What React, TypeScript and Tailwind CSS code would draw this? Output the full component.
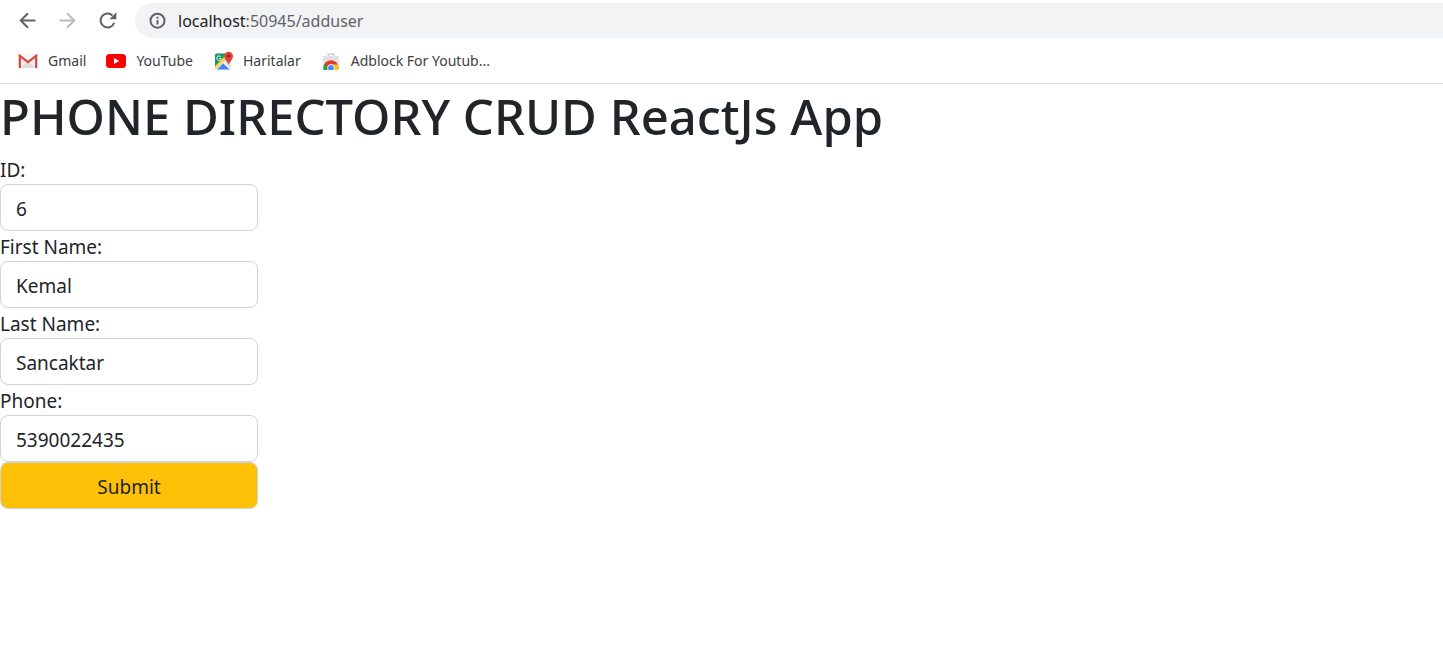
import { useState } from "react";
import type { ReactNode } from "react";

function BackIcon() {
  return (
    <svg viewBox="0 0 20 20" className="size-5" fill="none" stroke="currentColor" strokeWidth="2">
      <path d="M17.500 9.500H3M10 2.300 2.800 9.500l7.200 7.200" />
    </svg>
  );
}

function ForwardIcon() {
  return (
    <svg viewBox="0 0 20 20" className="size-5" fill="none" stroke="currentColor" strokeWidth="2">
      <path d="M1.500 9.500H16M9 2.300l7.200 7.200L9 16.700" />
    </svg>
  );
}

function ReloadIcon() {
  return (
    <svg viewBox="0 0 20 20" className="size-5" fill="none">
      <path d="M16.200 11.700A7 7 0 1 1 14.500 4.500" stroke="currentColor" strokeWidth="2" />
      <path d="M18.400 1.200v7h-7z" fill="currentColor" />
    </svg>
  );
}

function InfoIcon() {
  return (
    <svg viewBox="0 0 18 18" className="size-[18px]" fill="none" stroke="currentColor" strokeWidth="2">
      <circle cx="8.500" cy="8.700" r="7" />
      <path d="M8.500 8v4.600M8.500 4.800v1.900" />
    </svg>
  );
}

function GmailIcon() {
  return (
    <svg viewBox="0 0 20 20" className="size-5">
      <path d="M1 3.500h18v13.500H1z" fill="#ececec" />
      <path d="M3.500 17 10 10l6.500 7z" fill="#dcdcdc" />
      <path d="M3.500 5.500 10 10.500l6.500-5v-2h-13z" fill="#f8f8f8" />
      <path d="M1.800 17V4.700l8.200 6.500 8.200-6.500V17" fill="none" stroke="#d9483b" strokeWidth="2.200" />
    </svg>
  );
}

function YouTubeIcon() {
  return (
    <svg viewBox="0 0 20 20" className="size-5">
      <rect x="0" y="3" width="20" height="14" rx="3.500" fill="#ff0000" />
      <path d="M8 7v6l5.200-3z" fill="#fff" />
    </svg>
  );
}

function MapsIcon() {
  return (
    <svg viewBox="0 0 20 20" className="size-5">
      <defs>
        <clipPath id="map-sheet">
          <rect x="2" y="2.500" width="16" height="16" rx="1.500" />
        </clipPath>
      </defs>
      <g clipPath="url(#map-sheet)">
        <path d="M2 2h16v17H2z" fill="#e4e4e4" />
        <path d="M2 2h15L2 17z" fill="#1e9a5a" />
        <path d="M3.500 19 10.500 12l7 7z" fill="#4285f4" />
        <path d="M1 18 15 4" stroke="#fdd54a" strokeWidth="2.600" />
        <path d="M10.500 11.500 18.500 19.500" stroke="#fff" strokeWidth="1.200" />
      </g>
      <path d="M7.700 5.700A2.200 2.200 0 1 0 8.200 7.500H6.400" fill="none" stroke="#fff" strokeWidth="1" />
      <path d="M15.600 14.500c-.5-3.700-4.400-5.500-4.400-9.400a4.400 4.400 0 0 1 8.800 0c0 3.900-3.900 5.700-4.400 9.400z" fill="#e04438" />
      <circle cx="15.600" cy="5" r="1.500" fill="#7c211c" />
    </svg>
  );
}

function WebStoreIcon() {
  return (
    <svg viewBox="0 0 20 20" className="size-5">
      <defs>
        <clipPath id="store-bag">
          <path d="M2 5h16v13a1 1 0 0 1-1 1H3a1 1 0 0 1-1-1z" />
        </clipPath>
      </defs>
      <path d="M7.200 5V3.200h5.600V5" fill="none" stroke="#c9c9c9" strokeWidth="1.500" />
      <g clipPath="url(#store-bag)">
        <path d="M2 5h16v14H2z" fill="#e2e2e2" />
        <circle cx="10" cy="16.500" r="7.300" fill="#e33b2e" />
        <path d="M3.600 13 8 19H2.500a7.300 7.300 0 0 1 1.100-6z" fill="#27a34b" />
        <path d="M10.500 13.500h6.200a7.300 7.300 0 0 1 .5 5.500h-5.700z" fill="#fbc116" />
        <circle cx="10" cy="17" r="3.700" fill="#fff" />
        <circle cx="10" cy="17" r="2.900" fill="#4a8af4" />
      </g>
    </svg>
  );
}

function Bookmark({ icon, children }: { icon: ReactNode; children: ReactNode }) {
  return (
    <a href="#" className="flex items-center gap-[10px] whitespace-nowrap text-[14px] leading-5 text-[#3c4043]">
      {icon}
      {children}
    </a>
  );
}

function BrowserBar() {
  return (
    <header className="border-b border-[#dadce0] bg-white pt-[3px]">
      <div className="flex items-center pl-[18px] text-[#5f6368]">
        <nav className="flex gap-5 pr-[17px]">
          <button type="button" aria-label="Back"><BackIcon /></button>
          <button type="button" aria-label="Forward" className="text-[#babcbe]"><ForwardIcon /></button>
          <button type="button" aria-label="Reload"><ReloadIcon /></button>
        </nav>
        <div className="flex h-[35px] flex-1 items-center gap-[11px] rounded-l-full bg-[#f1f3f4] pl-[14px]">
          <InfoIcon />
          <p className="text-[16px] leading-6">
            <span className="text-[#202124]">localhost</span>:50945/adduser
          </p>
        </div>
      </div>
      <nav className="flex h-[45px] items-center gap-5 pl-[18px]">
        <Bookmark icon={<GmailIcon />}>Gmail</Bookmark>
        <Bookmark icon={<YouTubeIcon />}>YouTube</Bookmark>
        <Bookmark icon={<MapsIcon />}>Haritalar</Bookmark>
        <Bookmark icon={<WebStoreIcon />}>Adblock For Youtub...</Bookmark>
      </nav>
    </header>
  );
}

const fields = [
  { id: "id", label: "ID:", initial: "6" },
  { id: "firstName", label: "First Name:", initial: "Kemal" },
  { id: "lastName", label: "Last Name:", initial: "Sancaktar" },
  { id: "phone", label: "Phone:", initial: "5390022435" },
];

function UserForm() {
  const [values, setValues] = useState<Record<string, string>>(
    Object.fromEntries(fields.map((f) => [f.id, f.initial])),
  );
  return (
    <form className="flex w-[258px] flex-col text-[19px] leading-7" onSubmit={(e) => e.preventDefault()}>
      {fields.map((f) => (
        <div key={f.id} className="flex flex-col">
          <label htmlFor={f.id} className="pt-0.5">{f.label}</label>
          <input
            id={f.id}
            value={values[f.id]}
            onChange={(e) => setValues({ ...values, [f.id]: e.target.value })}
            className="h-[47px] rounded-lg border border-[#ced4da] bg-white px-[15px] pt-0.5"
          />
        </div>
      ))}
      <button type="submit" className="h-[47px] rounded-lg border border-[#ced4da] bg-[#ffc107] pt-0.5">
        Submit
      </button>
    </form>
  );
}

export default function App() {
  return (
    <div className="min-h-screen bg-white font-['Noto_Sans',sans-serif] text-[#212529]">
      <BrowserBar />
      <main>
        <h1 className="mb-2 pt-0.5 text-[49px] leading-[60px] font-medium">
          PHONE DIRECTORY CRUD ReactJs App
        </h1>
        <UserForm />
      </main>
    </div>
  );
}
